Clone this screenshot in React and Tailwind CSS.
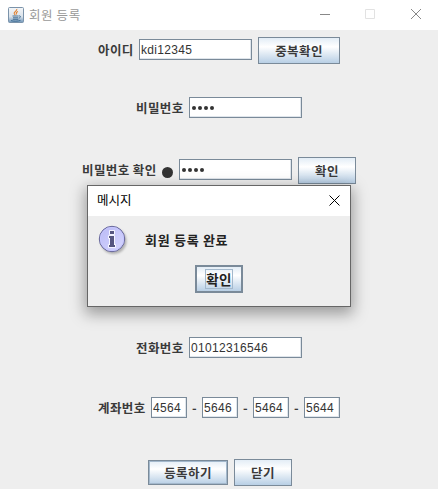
import React from 'react';

const koFont = "font-['Noto_Sans_CJK_KR',sans-serif]";

function Label({ className, children }) {
  return (
    <span className={`${koFont} shrink-0 whitespace-nowrap text-[12.5px] leading-[20px] font-bold tracking-[0.4px] text-[#3a3a3a] ${className}`}>
      {children}
    </span>
  );
}

function Field({ className = 'w-[113px]', children }) {
  return (
    <div className={`flex h-[21px] shrink-0 items-center border border-[#7a8a99] bg-white pl-px font-['Liberation_Sans',sans-serif] text-[12px] leading-[18px] tracking-[0.33px] text-[#333] shadow-[inset_-1px_-1px_0_#dfe5eb] ${className}`}>
      {children}
    </div>
  );
}

function Button({ className, children }) {
  return (
    <button className={`${koFont} flex shrink-0 items-center justify-center border-[#7a8a99] bg-linear-to-b from-[#e3edf6] via-white via-35% to-[#b8cfe5] whitespace-nowrap text-[12.5px] leading-[20px] font-bold tracking-[0.4px] text-[#3a3a3a] ${className}`}>
      {children}
    </button>
  );
}

function Dots() {
  return (
    <span className="flex gap-[2px] pl-px">
      {[0, 1, 2, 3].map((i) => (
        <i key={i} className="size-[4px] rounded-full bg-[#333]" />
      ))}
    </span>
  );
}

function JavaIcon() {
  return (
    <svg width="16" height="16" viewBox="0 0 16 16" fill="none">
      <defs>
        <linearGradient id="tile" x1="0" y1="0" x2="0" y2="1">
          <stop offset="0" stopColor="#f4f6f8" />
          <stop offset=".6" stopColor="#dbe3eb" />
          <stop offset="1" stopColor="#6f95b8" />
        </linearGradient>
      </defs>
      <rect x=".5" y=".5" width="15" height="15" rx="1" fill="url(#tile)" stroke="#7b93aa" />
      <path d="M8.8 2C9.3 4 5.5 4.700 6.200 6.500L7.300 8.300M10 4.500C8 5.300 7.800 6 8.800 7.300" stroke="#e0802f" strokeWidth="1.100" />
      <path d="M4.500 9h6M5 10.800h5.200M4.800 12.300h5.500M10.800 9c2.300-.6 2.300 1.600 0 2.100M3 13.600c2.500.9 7 .7 9.500-.2" stroke="#35658d" strokeWidth=".9" />
    </svg>
  );
}

function InfoIcon() {
  return (
    <svg width="32" height="32" viewBox="0 0 32 32">
      <defs>
        <filter id="soft" x="-20%" y="-20%" width="150%" height="150%">
          <feGaussianBlur stdDeviation="1" />
        </filter>
        <linearGradient id="disc" x1="0" y1="0" x2="1" y2="1">
          <stop offset="0" stopColor="#b9b9f5" />
          <stop offset="1" stopColor="#d8d8ff" />
        </linearGradient>
      </defs>
      <circle cx="15.500" cy="16" r="13" fill="#888" opacity=".6" filter="url(#soft)" />
      <circle cx="14" cy="14" r="12.700" fill="url(#disc)" stroke="#666699" />
      <circle cx="14" cy="14" r="11.600" fill="none" stroke="#c6c6ff" />
      <path d="M12 6h4v3h-4zM11 11h5v9h1v2h-6v-2h1v-7h-1z" fill="#555580" stroke="white" strokeWidth="1.600" paintOrder="stroke" />
    </svg>
  );
}

export default function App() {
  return (
    <div className="relative flex h-[489px] w-[438px] flex-col overflow-hidden bg-[#eee]">
      <header className="flex h-[30px] shrink-0 items-center bg-white pb-px pl-2">
        <JavaIcon />
        <span className={`${koFont} ml-[5px] text-[12.5px] leading-[20px] tracking-[0.6px] text-[#999]`}>회원 등록</span>
        <svg className="ml-auto" width="120" height="29" fill="none">
          <path d="M2 14.500h10" stroke="#888" />
          <path d="M47.500 9.500h9v9h-9z" stroke="#e2e2e2" />
          <path d="M93 9l10 10M103 9l-10 10" stroke="#888" />
        </svg>
      </header>

      <div className="mt-[7px] flex h-[27px] shrink-0 items-start pl-[98px]">
        <Label className="mt-[3px] w-[41px]">아이디</Label>
        <Field className="mt-[2px] w-[113px]">kdi12345</Field>
        <Button className="ml-[6px] h-[27px] w-[82px] border">중복확인</Button>
      </div>

      <div className="mt-[33px] flex h-[21px] shrink-0 items-center pl-[136px]">
        <Label className="w-[53px]">비밀번호</Label>
        <Field><Dots /></Field>
      </div>

      <div className="mt-[39px] flex h-[27px] shrink-0 items-start pl-[82px]">
        <Label className="mt-[3px] w-[80px]">비밀번호 확인</Label>
        <i className="mt-[10px] mr-[6px] size-[11px] rounded-full bg-[#333]" />
        <Field className="mt-[2px] w-[113px]"><Dots /></Field>
        <Button className="ml-[6px] h-[27px] w-[58px] border">확인</Button>
      </div>

      <div className="mt-[153px] flex h-[21px] shrink-0 items-center pl-[136px]">
        <Label className="w-[53px]">전화번호</Label>
        <Field>01012316546</Field>
      </div>

      <div className="mt-[39px] flex h-[21px] shrink-0 items-center pl-[98px]">
        <Label className="w-[53px]">계좌번호</Label>
        <Field className="w-[36px]">4564</Field>
        <Label className="w-[15px] text-center">-</Label>
        <Field className="w-[36px]">5646</Field>
        <Label className="w-[15px] text-center">-</Label>
        <Field className="w-[36px]">5464</Field>
        <Label className="w-[15px] text-center">-</Label>
        <Field className="w-[36px]">5644</Field>
      </div>

      <div className="mt-[41px] flex h-[27px] shrink-0 items-center gap-[6px] pl-[148px]">
        <Button className="h-[25px] w-[80px] border shadow-[inset_0_0_0_1px_#a3b8cc]">등록하기</Button>
        <Button className="h-[27px] w-[58px] border">닫기</Button>
      </div>

      <section className="absolute top-[185px] left-[87px] flex h-[122px] w-[264px] flex-col border border-[#666] bg-[#eee] shadow-[0_5px_14px_2px_rgba(0,0,0,0.35)]">
        <div className="flex h-[30px] shrink-0 items-center justify-between bg-white pr-[10px] pb-[2px] pl-[9px]">
          <span className={`${koFont} text-[12.5px] leading-[20px] text-black`}>메시지</span>
          <svg width="11" height="11" stroke="black" fill="none">
            <path d="M.5.5l10 10M10.500.5l-10 10" />
          </svg>
        </div>
        <div className="mt-[9px] flex h-[32px] shrink-0 items-start pl-[10px]">
          <InfoIcon />
          <span className={`${koFont} mt-[5px] ml-[15px] text-[13px] leading-[20px] font-bold tracking-[0.7px] whitespace-nowrap text-[#222]`}>회원 등록 완료</span>
        </div>
        <Button className="mt-[8px] ml-[107px] h-[28px] w-[48px] border-2">
          <span className="flex h-[20px] w-[28px] items-center justify-center border border-[#a3b8cc] text-[13.5px] text-[#222]">확인</span>
        </Button>
      </section>
    </div>
  );
}
